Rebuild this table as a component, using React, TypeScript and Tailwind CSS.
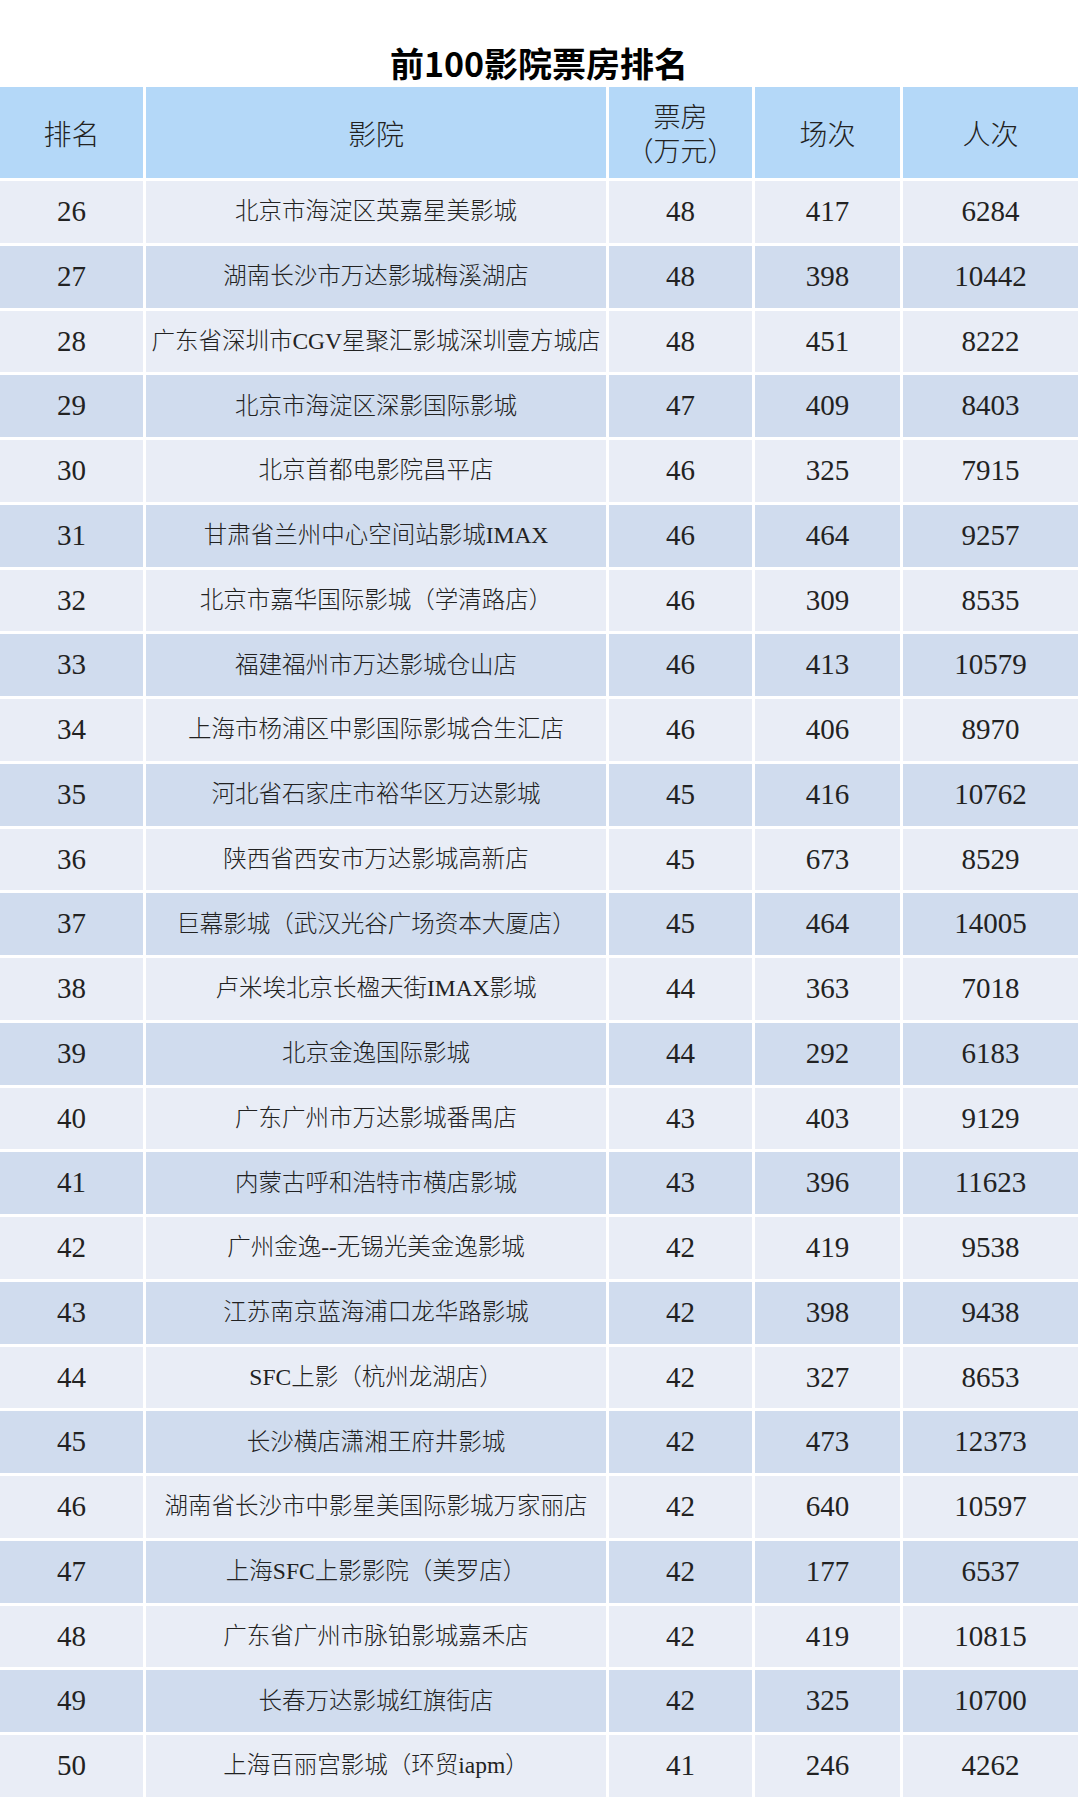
import React from "react";

type Row = [number, string, number, number, number];

const rows: Row[] = [
  [26, "北京市海淀区英嘉星美影城", 48, 417, 6284],
  [27, "湖南长沙市万达影城梅溪湖店", 48, 398, 10442],
  [28, "广东省深圳市CGV星聚汇影城深圳壹方城店", 48, 451, 8222],
  [29, "北京市海淀区深影国际影城", 47, 409, 8403],
  [30, "北京首都电影院昌平店", 46, 325, 7915],
  [31, "甘肃省兰州中心空间站影城IMAX", 46, 464, 9257],
  [32, "北京市嘉华国际影城（学清路店）", 46, 309, 8535],
  [33, "福建福州市万达影城仓山店", 46, 413, 10579],
  [34, "上海市杨浦区中影国际影城合生汇店", 46, 406, 8970],
  [35, "河北省石家庄市裕华区万达影城", 45, 416, 10762],
  [36, "陕西省西安市万达影城高新店", 45, 673, 8529],
  [37, "巨幕影城（武汉光谷广场资本大厦店）", 45, 464, 14005],
  [38, "卢米埃北京长楹天街IMAX影城", 44, 363, 7018],
  [39, "北京金逸国际影城", 44, 292, 6183],
  [40, "广东广州市万达影城番禺店", 43, 403, 9129],
  [41, "内蒙古呼和浩特市横店影城", 43, 396, 11623],
  [42, "广州金逸--无锡光美金逸影城", 42, 419, 9538],
  [43, "江苏南京蓝海浦口龙华路影城", 42, 398, 9438],
  [44, "SFC上影（杭州龙湖店）", 42, 327, 8653],
  [45, "长沙横店潇湘王府井影城", 42, 473, 12373],
  [46, "湖南省长沙市中影星美国际影城万家丽店", 42, 640, 10597],
  [47, "上海SFC上影影院（美罗店）", 42, 177, 6537],
  [48, "广东省广州市脉铂影城嘉禾店", 42, 419, 10815],
  [49, "长春万达影城红旗街店", 42, 325, 10700],
  [50, "上海百丽宫影城（环贸iapm）", 41, 246, 4262],
];

const numFont = "font-['Liberation_Serif','Noto_Sans_CJK_SC',serif]";
const nameFont = "font-['Liberation_Serif','Noto_Sans_CJK_SC',serif]";
const headFont = "font-['Noto_Sans_CJK_SC',sans-serif]";

export default function App() {
  return (
    <div className="w-[1080px] h-[1800px] bg-white overflow-hidden">
      <div className="h-[87px] w-[1078px] pt-[46px] flex justify-center">
        <div className="text-[34px] leading-[34px] font-bold text-black font-['Noto_Sans_CJK_SC',sans-serif]">
          前100影院票房排名
        </div>
      </div>
      <div className="grid grid-cols-[143px_460px_143px_145px_175px] gap-[3px] w-[1078px] text-[#222]">
        <div className={`h-[91px] bg-[#b4d8f8] flex items-center justify-center text-[28px] font-light ${headFont}`}>排名</div>
        <div className={`h-[91px] bg-[#b4d8f8] flex items-center justify-center text-[28px] font-light ${headFont}`}>影院</div>
        <div className={`h-[91px] bg-[#b4d8f8] flex flex-col items-center justify-center text-[27px] leading-[34px] font-light ${headFont}`}>
          <div className="h-[34px]">票房</div>
          <div className="h-[34px]">（万元）</div>
        </div>
        <div className={`h-[91px] bg-[#b4d8f8] flex items-center justify-center text-[28px] font-light ${headFont}`}>场次</div>
        <div className={`h-[91px] bg-[#b4d8f8] flex items-center justify-center text-[28px] font-light ${headFont}`}>人次</div>
        {rows.map((r, i) => {
          const bg = i % 2 === 0 ? "bg-[#e9edf6]" : "bg-[#d0dcee]";
          return (
            <React.Fragment key={r[0]}>
              <div className={`h-[61.75px] ${bg} flex items-center justify-center text-[29px] ${numFont}`}>{r[0]}</div>
              <div className={`h-[61.75px] ${bg} flex items-center justify-center text-[23.5px] font-light whitespace-nowrap ${nameFont}`}>{r[1]}</div>
              <div className={`h-[61.75px] ${bg} flex items-center justify-center text-[29px] ${numFont}`}>{r[2]}</div>
              <div className={`h-[61.75px] ${bg} flex items-center justify-center text-[29px] ${numFont}`}>{r[3]}</div>
              <div className={`h-[61.75px] ${bg} flex items-center justify-center text-[29px] ${numFont}`}>{r[4]}</div>
            </React.Fragment>
          );
        })}
      </div>
    </div>
  );
}
